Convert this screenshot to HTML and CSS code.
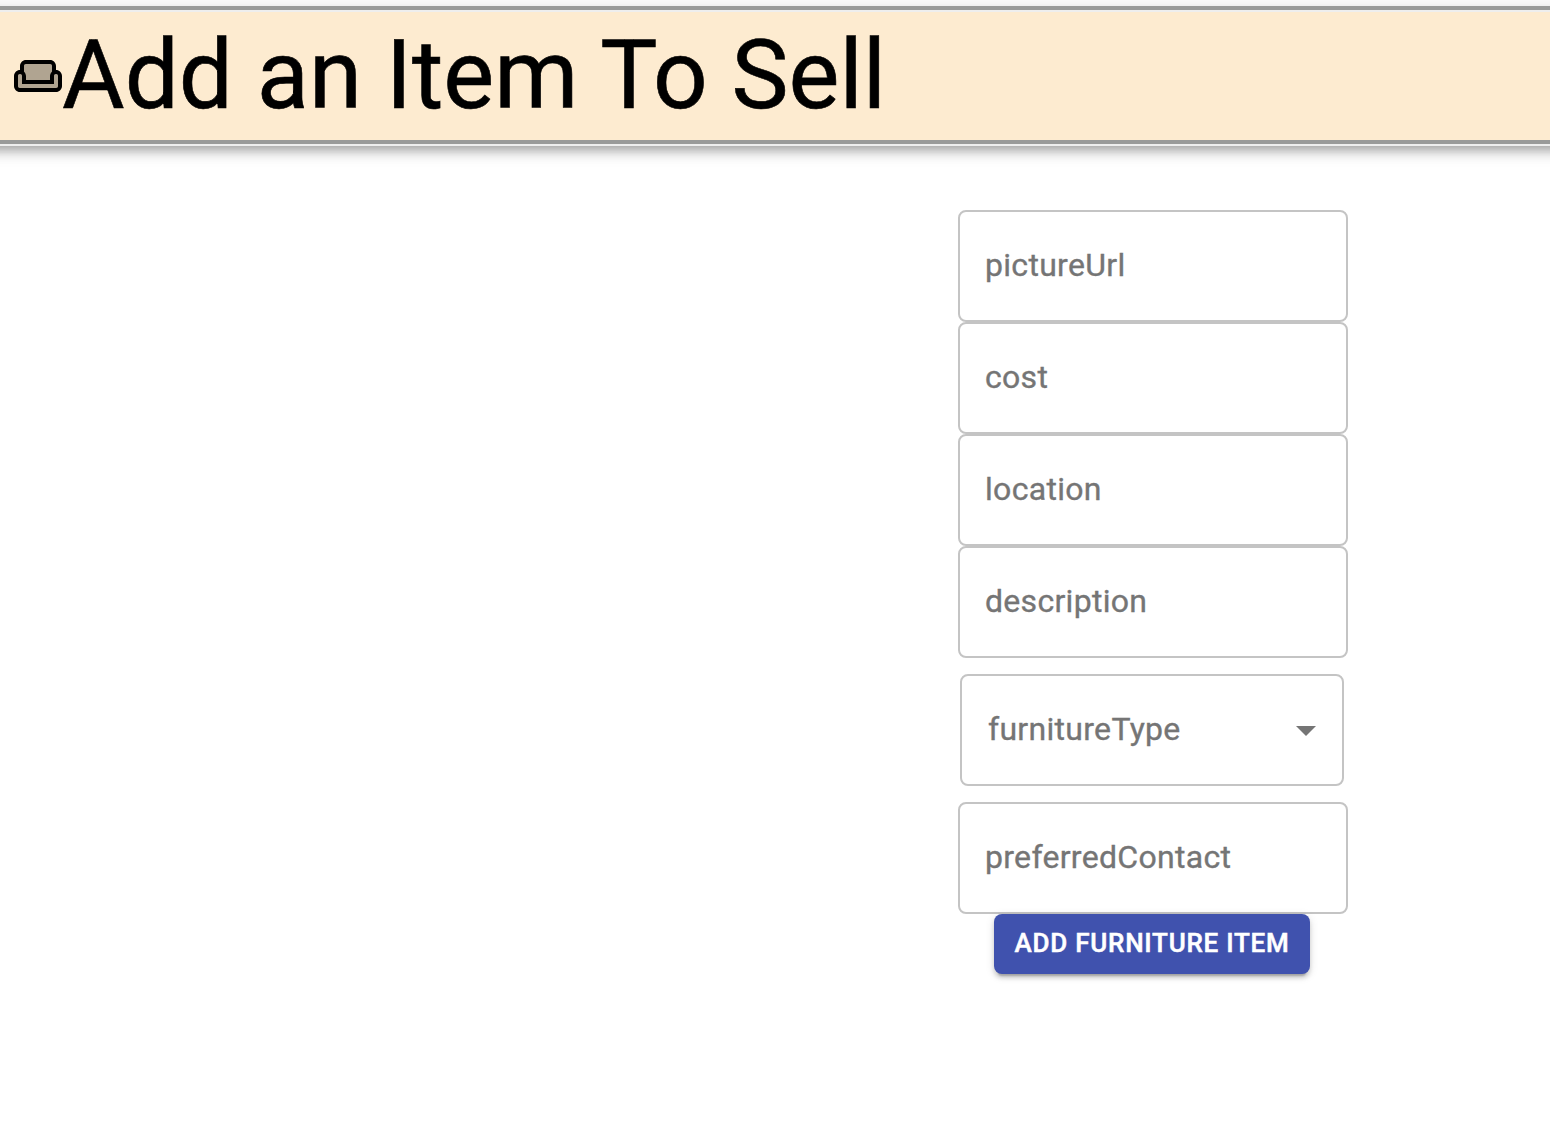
FILE: index.html
```html
<!DOCTYPE html>
<html lang="en">
<head>
<meta charset="utf-8">
<title>Add an Item To Sell</title>
<link rel="stylesheet" href="styles.css">
</head>
<body>
<header class="app-bar">
  <svg class="app-icon" viewBox="0 0 24 24" aria-hidden="true">
    <path opacity=".3" d="M5 7c0-.55.45-1 1-1h12c.55 0 1 .45 1 1v2.78c-.61.55-1 1.34-1 2.22v2H6v-2c0-.88-.39-1.67-1-2.22V7zm17 10c0 .55-.45 1-1 1H3c-.55 0-1-.45-1-1v-5c0-.55.45-1 1-1s1 .45 1 1v4h16v-4c0-.55.45-1 1-1s1 .45 1 1v5z"/>
    <path d="M21 9V7c0-1.65-1.35-3-3-3H6C4.35 4 3 5.35 3 7v2c-1.65 0-3 1.35-3 3v5c0 1.65 1.35 3 3 3h18c1.65 0 3-1.35 3-3v-5c0-1.65-1.35-3-3-3zM5 7c0-.55.45-1 1-1h12c.55 0 1 .45 1 1v2.78c-.61.55-1 1.34-1 2.22v2H6v-2c0-.88-.39-1.67-1-2.22V7zm17 10c0 .55-.45 1-1 1H3c-.55 0-1-.45-1-1v-5c0-.55.45-1 1-1s1 .45 1 1v4h16v-4c0-.55.45-1 1-1s1 .45 1 1v5z"/>
  </svg>
  <h1 class="title">Add an Item To Sell</h1>
</header>
<main class="content">
  <form class="form">
    <label class="field">pictureUrl</label>
    <label class="field">cost</label>
    <label class="field">location</label>
    <label class="field">description</label>
    <div class="field select">
      <span>furnitureType</span>
      <svg class="arrow" viewBox="0 0 24 24" aria-hidden="true"><path d="M7 10l5 5 5-5z"/></svg>
    </div>
    <label class="field">preferredContact</label>
    <button class="submit" type="button">Add Furniture Item</button>
  </form>
</main>
</body>
</html>
```
FILE: styles.css
```css
* {
  box-sizing: border-box;
}

body {
  min-height: 100vh;
  margin: 0;
  padding-top: 6px;
  background: #fff;
  font-family: Roboto, "Liberation Sans", sans-serif;
  overflow: hidden;
}

/* Bleeds past both window edges so the shadow runs full width. */
.app-bar {
  display: flex;
  align-items: center;
  height: 140px;
  margin: 0 -24px;
  padding: 0 38px;
  background: linear-gradient(#999a99 0 4px, #eee 4px 6px, #fdebd0 6px 134px, #999a99 134px 138px, #eee 138px);
  box-shadow:
    0 4px 8px -2px rgba(0, 0, 0, 0.2),
    0 8px 10px 0 rgba(0, 0, 0, 0.14),
    0 2px 20px 0 rgba(0, 0, 0, 0.12);
}

.app-icon {
  flex: none;
  width: 48px;
  height: 48px;
}

.title {
  margin: 0;
  padding-bottom: 2px;
  font-size: 96px;
  font-weight: 400;
  line-height: 112px;
  white-space: nowrap;
  -webkit-text-stroke: 0.6px;
}

.content {
  display: flex;
  justify-content: flex-end;
  padding: 64px 202px 0 0;
}

.form {
  display: flex;
  flex-direction: column;
  width: 390px;
}

.field {
  display: flex;
  align-items: center;
  height: 112px;
  padding: 0 24px 2px 25px;
  border: 2px solid #c4c4c4;
  border-radius: 8px;
  color: #757575;
  font-size: 32px;
  letter-spacing: 0.3px;
  -webkit-text-stroke: 0.35px;
}

.select {
  justify-content: space-between;
  width: 384px;
  margin: 16px 2px;
  padding-left: 26px;
  padding-right: 12px;
}

.arrow {
  width: 48px;
  height: 48px;
  margin-top: 2px;
  fill: #757575;
}

.submit {
  align-self: center;
  width: 316px;
  height: 60px;
  margin-right: 2px;
  padding: 0 0 2px;
  border: 0;
  border-radius: 8px;
  background: #4052ae;
  color: #fff;
  font: 500 26px Roboto, "Liberation Sans", sans-serif;
  letter-spacing: 0.743px;
  text-transform: uppercase;
  white-space: nowrap;
  -webkit-text-stroke: 0.5px;
  box-shadow:
    0 6px 2px -4px rgba(0, 0, 0, 0.2),
    0 4px 4px 0 rgba(0, 0, 0, 0.14),
    0 2px 10px 0 rgba(0, 0, 0, 0.12);
}
```
